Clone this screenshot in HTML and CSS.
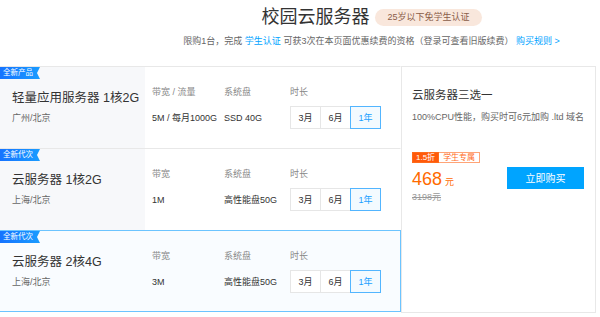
FILE: index.html
```html
<!DOCTYPE html>
<html lang="zh-CN">
<head>
<meta charset="UTF-8">
<meta name="viewport" content="width=device-width, initial-scale=1.0">
<title>校园云服务器</title>
<link rel="stylesheet" href="styles.css">
</head>
<body>

<header class="head">
  <div class="title-line">
    <h1 class="title">校园云服务器</h1>
    <span class="age-tag">25岁以下免学生认证</span>
  </div>
  <p class="notice">限购1台，完成 <a href="#">学生认证</a> 可获3次在本页面优惠续费的资格（登录可查看旧版续费） <a href="#">购买规则 &gt;</a></p>
</header>

<main class="shop">
  <div class="plans">
    <div class="plan">
      <span class="plan-tag">全新产品</span>
      <div class="plan-info">
        <h3 class="plan-name">轻量应用服务器 1核2G</h3>
        <p class="plan-area">广州/北京</p>
      </div>
      <div class="spec">
        <span class="spec-label">带宽 / 流量</span>
        <span class="spec-value">5M / 每月1000G</span>
      </div>
      <div class="spec">
        <span class="spec-label">系统盘</span>
        <span class="spec-value">SSD 40G</span>
      </div>
      <div class="spec">
        <span class="spec-label">时长</span>
        <div class="periods"><button>3月</button><button>6月</button><button class="on">1年</button></div>
      </div>
    </div>

    <div class="plan">
      <span class="plan-tag">全新代次</span>
      <div class="plan-info">
        <h3 class="plan-name">云服务器 1核2G</h3>
        <p class="plan-area">上海/北京</p>
      </div>
      <div class="spec">
        <span class="spec-label">带宽</span>
        <span class="spec-value">1M</span>
      </div>
      <div class="spec">
        <span class="spec-label">系统盘</span>
        <span class="spec-value">高性能盘50G</span>
      </div>
      <div class="spec">
        <span class="spec-label">时长</span>
        <div class="periods"><button>3月</button><button>6月</button><button class="on">1年</button></div>
      </div>
    </div>

    <div class="plan active">
      <span class="plan-tag">全新代次</span>
      <div class="plan-info">
        <h3 class="plan-name">云服务器 2核4G</h3>
        <p class="plan-area">上海/北京</p>
      </div>
      <div class="spec">
        <span class="spec-label">带宽</span>
        <span class="spec-value">3M</span>
      </div>
      <div class="spec">
        <span class="spec-label">系统盘</span>
        <span class="spec-value">高性能盘50G</span>
      </div>
      <div class="spec">
        <span class="spec-label">时长</span>
        <div class="periods"><button>3月</button><button>6月</button><button class="on">1年</button></div>
      </div>
    </div>
  </div>

  <aside class="buy">
    <h3 class="buy-name">云服务器三选一</h3>
    <p class="buy-desc">100%CPU性能，购买时可6元加购 .ltd 域名</p>
    <div class="buy-row">
      <div class="buy-price">
        <div class="deal"><span class="deal-off">1.5折</span><span class="deal-who">学生专属</span></div>
        <div class="price">468<small>元</small></div>
        <div class="old">3198元</div>
      </div>
      <button class="buy-btn">立即购买</button>
    </div>
  </aside>
</main>

</body>
</html>
```

FILE: styles.css
```css
body {
  margin: 0;
  font-family: "Liberation Sans", "Noto Sans CJK SC", sans-serif;
  color: #333;
  background: #fff;
}

/* top title */
.head {
  padding: 6px 0 0 143px;
  text-align: center;
}
.title-line {
  display: flex;
  justify-content: center;
  align-items: center;
  gap: 6px;
  height: 22px;
}
.title {
  margin: 0;
  font-size: 18px;
  font-weight: normal;
  line-height: 22px;
  color: #333;
}
.age-tag {
  font-size: 9px;
  line-height: 17px;
  padding: 0 12px;
  border-radius: 9px;
  background: #f9e7dc;
  color: #8a5c48;
}
.notice {
  margin: 7px 0 0;
  font-size: 9px;
  line-height: 12px;
  color: #666;
}
.notice a {
  color: #00a4ff;
  text-decoration: none;
}

/* plans list */
.shop {
  display: flex;
  margin-top: 19px;
}
.plans {
  width: 402px;
  margin-left: -1px;
}
.plan {
  position: relative;
  display: grid;
  grid-template-columns: 145px 72px 66px 1fr;
  height: 82px;
  box-sizing: border-box;
  border-top: 1px solid #e8e8e8;
  border-left: 1px solid transparent;
  border-right: 1px solid transparent;
}
.plan.active {
  border: 1px solid #6cc4ff;
  background: #f9fcff;
}
.plan-tag {
  position: absolute;
  top: 0;
  left: 0;
  height: 12px;
  padding: 0 7px 0 3px;
  font-size: 7.5px;
  line-height: 12px;
  color: #fff;
  background: linear-gradient(90deg, #1673ff, #1a9cff);
  clip-path: polygon(0 0, 100% 0, calc(100% - 3px) 50%, 100% 100%, 0 100%);
}
.plan-info {
  background: #f7f8fa;
  padding: 23px 0 0 12px;
}
.plan.active .plan-info {
  background: none;
}
.plan-name {
  margin: 0;
  font-size: 12.5px;
  font-weight: normal;
  line-height: 16px;
  color: #333;
  white-space: nowrap;
}
.plan-area {
  margin: 6px 0 0;
  font-size: 9px;
  line-height: 12px;
  color: #666;
}
.spec {
  display: flex;
  flex-direction: column;
  padding: 19px 0 0 7px;
}
.spec-label {
  font-size: 9px;
  line-height: 12px;
  color: #888;
}
.spec-value {
  margin-top: 8px;
  height: 23px;
  display: flex;
  align-items: center;
  font-size: 9px;
  color: #333;
  white-space: nowrap;
}
.periods {
  display: flex;
  margin-top: 8px;
}
.periods button {
  width: 31px;
  height: 23px;
  margin-left: -1px;
  padding: 0;
  border: 1px solid #e6e6e6;
  background: #fff;
  font-family: inherit;
  font-size: 9px;
  color: #333;
  cursor: pointer;
}
.periods button:first-child {
  margin-left: 0;
}
.periods button.on {
  position: relative;
  border-color: #52b5ff;
  background: #f3faff;
  color: #1aa0ff;
}

/* buy panel */
.buy {
  width: 195px;
  height: 247px;
  box-sizing: border-box;
  border: 1px solid #e8e8e8;
  padding: 21px 11px 0 10px;
}
.buy-name {
  margin: 0;
  font-size: 11.5px;
  font-weight: normal;
  line-height: 14px;
  color: #333;
}
.buy-desc {
  margin: 9px 0 0;
  font-size: 9px;
  line-height: 12px;
  color: #666;
  white-space: nowrap;
}
.buy-row {
  display: flex;
  align-items: center;
  justify-content: space-between;
  margin-top: 29px;
}
.deal {
  display: flex;
}
.deal span {
  font-size: 8px;
  line-height: 9px;
  padding: 0 4px;
  border: 1px solid #ff6a1a;
}
.deal-off {
  background: #ff5a0a;
  color: #fff;
  padding: 0 3px !important;
}
.deal-who {
  border-color: #ffa477 !important;
  border-left: none !important;
  background: #fff;
  color: #ff6a1a;
}
.price {
  margin-top: 6px;
  font-size: 18px;
  line-height: 20px;
  color: #ff6a00;
}
.price small {
  font-size: 9px;
  margin-left: 3px;
}
.old {
  font-size: 9px;
  line-height: 11px;
  color: #999;
  text-decoration: line-through;
}
.buy-btn {
  width: 77px;
  height: 22px;
  border: none;
  background: #00a4ff;
  color: #fff;
  font-family: inherit;
  font-size: 10px;
  cursor: pointer;
}
```
